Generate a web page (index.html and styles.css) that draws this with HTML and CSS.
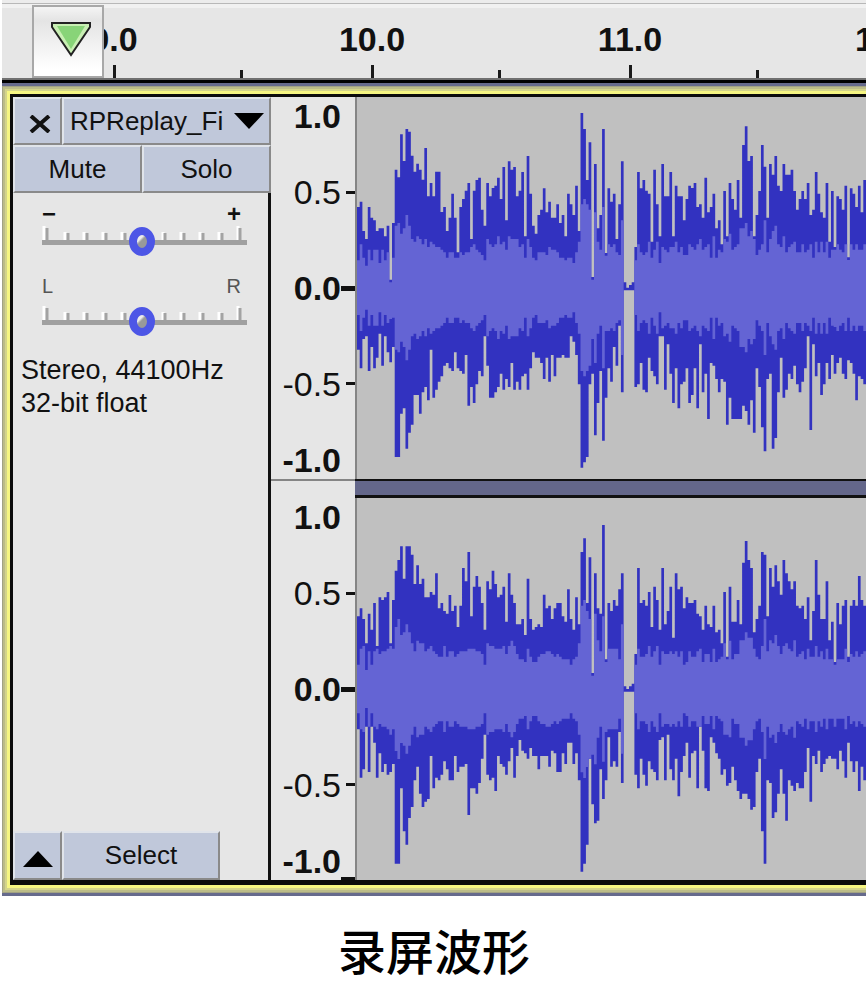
FILE: index.html
```html
<!DOCTYPE html>
<html lang="zh-CN">
<head>
<meta charset="utf-8">
<title>录屏波形</title>
<link rel="stylesheet" href="styles.css">
</head>
<body>
<figure class="figure">
  <div class="editor">
    <div class="ruler">
      <div class="ruler-scale">
        <div class="ruler-cell"><span>9.0</span></div>
        <div class="ruler-cell"><span>10.0</span></div>
        <div class="ruler-cell"><span>11.0</span></div>
        <div class="ruler-cell"><span>12.0</span></div>
      </div>
      <button class="pin" aria-label="Playhead">
        <svg width="42" height="38" viewBox="0 0 42 38"><path d="M2 3H40V7L21 35L2 7Z" fill="#c9efb4" stroke="#222" stroke-width="2"/><path d="M7 6H35L21 29Z" fill="#88d478"/></svg>
      </button>
    </div>
    <div class="track">
      <section class="panel">
        <div class="title-row">
          <button class="cell" aria-label="Close"><svg class="close-icon" width="22" height="18" viewBox="0 0 22 18"><path d="M2 1L20 17M20 1L2 17" stroke="#111" stroke-width="4"/></svg></button>
          <button class="cell title"><span>RPReplay_Fi</span><svg width="30" height="16" viewBox="0 0 30 16"><path d="M0 0H30L15 16Z"/></svg></button>
        </div>
        <div class="mute-row">
          <button class="cell">Mute</button>
          <button class="cell">Solo</button>
        </div>
        <div class="slider gain">
          <div class="ends"><span>−</span><span>+</span></div>
          <div class="rail">
            <svg class="ticks" width="205" height="20" viewBox="0 0 205 20"><use href="#slider-ticks"/></svg>
            <input type="range" min="-36" max="36" value="0" aria-label="Gain">
          </div>
        </div>
        <div class="slider pan">
          <div class="ends"><span>L</span><span>R</span></div>
          <div class="rail">
            <svg class="ticks" width="205" height="20" viewBox="0 0 205 20">
              <g id="slider-ticks">
                <path d="M2 0V14M23 6V14M42 6V14M61 6V14M80 6V14M121 6V14M139 6V14M158 6V14M177 6V14M196 0V14" stroke="#fff" stroke-width="3"/>
                <path d="M5 2V14M26 7V14M45 7V14M64 7V14M83 7V14M123 7V14M142 7V14M161 7V14M180 7V14M198 2V14" stroke="#a3a3a3" stroke-width="3"/>
                <path d="M0 14H205V19H0Z" fill="#a0a0a0"/>
              </g>
            </svg>
            <input type="range" min="-100" max="100" value="0" aria-label="Pan">
          </div>
        </div>
        <p class="info">Stereo, 44100Hz<br>32-bit float</p>
        <div class="foot-row">
          <button class="cell" aria-label="Collapse"><svg class="up-icon" width="30" height="16" viewBox="0 0 30 16"><path d="M0 16H30L15 0Z"/></svg></button>
          <button class="cell">Select</button>
        </div>
      </section>
      <div class="channels">
        <div class="channel">
          <ol class="axis"><li>1.0</li><li class="half">0.5</li><li class="zero">0.0</li><li class="half">-0.5</li><li>-1.0</li></ol>
          <svg class="wave" id="left" viewBox="0 22 189 1146" preserveAspectRatio="none" role="img" aria-label="Left channel"></svg>
        </div>
        <div class="divider"></div>
        <div class="channel">
          <ol class="axis last"><li>1.0</li><li class="half">0.5</li><li class="zero">0.0</li><li class="half">-0.5</li><li>-1.0</li></ol>
          <svg class="wave" id="right" viewBox="0 24 189 1146" preserveAspectRatio="none" role="img" aria-label="Right channel"></svg>
        </div>
      </div>
    </div>
  </div>
  <figcaption>录屏波形</figcaption>
</figure>
<script src="wave.js"></script>
</body>
</html>
```
FILE: styles.css
```css
* { box-sizing: border-box; }
body { margin: 0; background: #fff; color: #111; font-family: "Liberation Sans", Arial, sans-serif; }
.figure { margin: 0; padding: 0 2px; }
.editor { overflow: hidden; }

.ruler {
  position: relative;
  height: 83px;
  overflow: hidden;
  border-bottom: 3px solid #000;
  background: linear-gradient(#ececec 3px, #b8b8b8 3px, #b8b8b8 4px, #f1f1f1 4px, #f1f1f1 8px, #e6e6e6 8px, #e6e6e6 78px, #707070 78px);
}
.ruler-scale { display: flex; margin-left: -17px; height: 78px; }
.ruler-cell {
  flex: none;
  width: 258px;
  padding-top: 19px;
  text-align: center;
  font-size: 34px;
  line-height: 40px;
  font-weight: bold;
  background:
    linear-gradient(#1a1a1a, #1a1a1a) 50% 100% / 3px 13px no-repeat,
    linear-gradient(#1a1a1a, #1a1a1a) 100% 100% / 3px 8px no-repeat;
}
.pin {
  position: absolute;
  left: 30px;
  top: 5px;
  width: 72px;
  height: 73px;
  padding: 0 0 6px 6px;
  border: 2px solid #a8a8a8;
  background: linear-gradient(#f4f4f4, #e4e4e4 20%, #fff 90%);
}
.pin svg { display: block; margin: 0 auto; }

.track {
  display: grid;
  grid-template-columns: 258px 1fr;
  margin-right: -11px;
  padding: 11px 11px 13px 11px;
  border: solid #666a8c;
  border-width: 3px 0;
  box-shadow:
    inset 0 0 0 1px #a2a283,
    inset 0 0 0 3px #bcbc88,
    inset 0 0 0 5px #d4d48a,
    inset 0 0 0 8px #f6f682,
    inset 0 0 0 16px #0c0c0c;
}
.panel { display: flex; flex-direction: column; background: #e6e6e6; border-right: 3px solid #111; }
.title-row, .mute-row { display: grid; margin-right: -3px; height: 48px; }
.title-row { grid-template-columns: 49px 1fr; }
.mute-row { grid-template-columns: 1fr 1fr; }
.cell {
  display: flex;
  align-items: center;
  justify-content: center;
  padding: 0;
  border: 2px solid;
  border-color: #e0e4ea #8a8a8a #8a8a8a #e0e4ea;
  background: #c0c8da;
  color: #111;
  font: 26px "Liberation Sans", Arial, sans-serif;
}
.title { justify-content: space-between; padding: 0 5px 0 6px; }
.close-icon { margin: 6px 0 0 5px; }
.slider { margin: 0 24px 0 29px; }
.ends { display: flex; justify-content: space-between; padding-right: 3px; }
.gain { padding-top: 8px; }
.gain .ends { font-size: 24px; line-height: 26px; font-weight: bold; }
.pan { padding-top: 10px; }
.pan .ends { height: 33px; font-size: 20px; line-height: 24px; color: #555; }
.rail { position: relative; height: 37px; }
.ticks { position: absolute; left: 0; top: -1px; }
.rail input {
  position: absolute;
  left: 0;
  top: -1px;
  width: 200px;
  height: 30px;
  margin: 0;
  appearance: none;
  background: none;
}
.rail input::-webkit-slider-thumb {
  appearance: none;
  width: 26px;
  height: 29px;
  border: 8px solid #4d56e6;
  border-radius: 50%;
  background: linear-gradient(135deg, #eee 30%, #999 45%);
}
.info { margin: 10px 0 0; padding-left: 8px; font-size: 27px; line-height: 33px; white-space: nowrap; }
.foot-row { display: grid; grid-template-columns: 49px 158px; height: 49px; margin-top: auto; }
.up-icon { margin-top: 6px; }

.channels { min-width: 0; background: #e6e6e6; }
.channel { display: grid; grid-template-columns: 86px 1fr; height: 382px; }
.axis {
  display: grid;
  grid-template-rows: 37fr 116fr 76fr 115fr 38fr;
  margin: 0;
  padding: 0;
  list-style: none;
  border-right: 2px solid #858585;
  font-size: 34px;
  line-height: 34px;
  font-weight: bold;
}
.axis li { display: flex; align-items: center; justify-content: flex-end; padding-right: 14px; }
.axis li::after { content: ""; background: #111; }
.axis .half { font-weight: normal; padding-right: 0; }
.axis .half::after { width: 9px; height: 3px; margin-left: 5px; }
.axis .zero { padding-right: 0; }
.axis .zero::after { width: 14px; height: 5px; }
.axis.last { background: linear-gradient(#111, #111) 100% 100% / 14px 3px no-repeat; }
.divider {
  height: 19px;
  margin-left: 84px;
  border: solid #111;
  border-width: 2px 0 3px;
  background: #64678a;
  box-shadow: -84px 0 0 #858585;
}
.divider::before {
  content: "";
  display: block;
  width: 84px;
  height: 17px;
  margin-left: -84px;
  background: #e6e6e6;
}
.wave { display: block; width: 100%; height: 382px; background: #c0c0c0; }
.peak { fill: #3232c0; }
.rms { fill: #6464d4; }

figcaption {
  padding-top: 13px;
  text-align: center;
  font: 500 48px/80px "Noto Sans CJK SC", sans-serif;
  color: #000;
}
```
FILE: wave.js
```js
// Each list holds one vertical position per sample column: the upper peak,
// the lower peak and the upper RMS edge (the lower one mirrors it).
const channels = {
  left: {
    mirror: 1188,
    top: [352,336,424,448,352,384,392,424,416,416,440,408,570,400,240,263,134,214,118,126,198,246,222,240,270,175,320,280,320,246,246,367,352,424,384,312,384,488,352,328,303,280,448,303,271,264,360,408,280,320,295,288,264,328,232,392,215,240,232,320,303,247,440,199,312,408,432,376,360,296,368,336,384,384,344,400,376,440,312,344,376,288,424,70,118,271,158,562,223,416,376,118,490,296,336,312,448,344,215,578,594,586,578,472,247,296,271,303,312,456,240,344,440,223,320,320,247,440,288,320,320,392,328,288,295,280,352,344,384,264,368,352,312,416,392,464,304,440,280,328,360,271,384,166,110,214,199,440,376,304,166,231,384,223,255,199,288,304,223,255,255,240,304,360,328,304,328,280,376,360,247,312,368,384,280,456,304,472,320,328,360,288,503,296,312,352,288,368,271],
    bottom: [780,836,748,740,844,772,836,804,732,828,740,788,818,772,1102,1102,972,956,1077,1029,1005,916,916,972,908,892,932,780,924,900,876,860,828,820,836,844,788,836,844,852,796,948,892,940,884,844,860,740,828,924,924,908,892,852,900,868,892,820,900,876,900,860,852,900,836,788,804,804,820,868,804,876,796,860,804,804,796,804,804,740,756,796,884,1134,1118,1102,884,852,1037,940,844,1053,924,836,876,772,828,708,908,602,602,602,602,892,884,820,900,908,804,844,860,884,740,740,900,764,852,940,836,956,884,876,836,940,916,836,956,764,908,852,988,820,828,868,908,868,876,1005,924,988,988,988,988,948,964,1005,932,1029,836,892,1013,1085,868,852,1077,1045,908,804,924,900,852,868,828,884,908,876,836,740,1021,764,860,820,916,884,820,868,796,852,820,804,852,868,812,820,852,932,860,868,884],
    rms: [512,464,504,528,480,512,480,480,520,480,512,488,500,504,408,400,432,416,376,408,448,456,440,448,464,448,472,456,464,472,472,480,488,504,488,488,504,504,488,496,488,488,472,464,480,488,496,512,448,464,472,464,440,464,456,480,440,448,448,448,472,464,504,448,472,504,512,488,488,488,496,472,480,480,488,504,504,512,504,504,520,488,456,344,328,344,360,440,368,456,480,352,464,464,472,464,488,496,392,602,602,602,602,512,464,488,496,488,456,504,480,456,520,472,480,488,472,472,456,488,472,496,496,464,472,480,464,448,480,472,464,504,440,504,480,488,448,456,432,480,472,464,416,416,400,440,424,440,496,480,464,392,488,448,424,408,464,472,440,488,472,464,456,488,488,464,488,480,464,504,456,488,456,488,456,504,480,476,464,480,488,464,504,464,480,464,480,480,464]
  },
  right: {
    mirror: 1194,
    top: [379,355,387,460,371,419,339,468,322,330,322,306,460,330,242,210,169,266,169,169,194,282,226,282,266,322,322,306,314,250,355,339,363,371,315,363,347,411,347,234,274,186,379,290,258,290,339,419,274,298,242,282,322,314,290,395,250,314,339,403,403,387,435,266,387,419,411,403,411,314,355,347,387,355,339,339,379,395,298,387,419,322,403,186,145,339,202,549,250,355,371,105,508,339,363,330,347,298,250,589,597,589,581,492,234,339,330,347,306,411,290,330,419,234,403,363,290,443,250,298,290,355,322,339,339,330,371,379,419,347,403,411,347,427,419,460,306,500,290,395,395,330,403,218,153,210,234,427,387,347,186,194,379,234,290,226,274,314,210,250,274,298,274,347,355,347,387,322,451,363,210,314,387,387,274,451,395,516,339,403,347,330,500,347,330,347,258,330,347],
    bottom: [718,863,838,710,846,710,758,863,790,846,822,854,846,822,1121,1121,895,1024,1064,984,951,871,830,911,951,935,927,798,895,863,871,854,814,838,871,871,798,846,830,830,822,975,895,895,911,879,806,734,854,871,863,903,798,822,830,854,814,774,863,798,750,782,790,806,774,798,798,838,798,798,798,830,782,790,846,846,790,822,758,758,822,790,871,1145,1121,1064,806,943,1000,992,838,927,871,742,830,814,830,726,879,605,605,605,605,854,895,806,854,887,814,838,846,871,750,742,871,734,838,871,806,919,846,798,758,863,790,782,895,710,782,895,903,742,758,790,806,854,838,887,879,830,871,903,927,911,911,927,959,951,846,806,1024,1121,871,879,984,967,911,838,911,992,871,887,903,879,895,895,846,774,935,798,822,782,846,822,806,798,806,806,838,782,814,863,758,814,846,814,903,830,871],
    rms: [524,476,468,540,484,524,484,476,492,484,484,476,460,476,411,387,435,427,403,427,460,484,452,460,460,484,476,468,484,492,500,500,468,500,484,484,500,492,484,484,484,476,476,476,484,484,492,524,460,468,468,476,476,476,468,492,468,452,468,492,508,508,516,476,500,516,516,500,492,492,484,484,492,500,492,500,508,508,508,524,508,500,460,347,330,363,387,400,371,451,484,379,468,476,476,476,476,508,403,605,605,605,605,524,476,500,500,492,468,500,484,468,524,484,492,492,484,492,484,500,484,524,516,484,500,500,484,476,516,492,492,516,476,516,508,500,460,460,452,508,492,492,451,451,427,443,443,476,500,508,468,387,484,451,460,435,468,492,468,460,476,484,451,500,492,484,508,476,500,500,468,500,484,508,476,508,508,484,508,508,508,476,516,492,500,484,500,492,484]
  }
};

function outline(tops, bottoms) {
  const upper = tops.map((y, i) => `${i} ${y} ${i + 1} ${y}`);
  const lower = bottoms.map((y, i) => `${i + 1} ${y} ${i} ${y}`).reverse();
  return `M${upper.join(" ")} ${lower.join(" ")}Z`;
}

function addPath(svg, name, d) {
  const path = document.createElementNS("http://www.w3.org/2000/svg", "path");
  path.setAttribute("class", name);
  path.setAttribute("d", d);
  svg.append(path);
}

for (const [id, data] of Object.entries(channels)) {
  const svg = document.getElementById(id);
  const silent = i => data.rms[i] > 590;
  const rmsTop = data.rms.map((y, i) => silent(i) ? data.bottom[i] : Math.max(y, data.top[i] + 8));
  const rmsBottom = data.rms.map((y, i) => silent(i) ? data.bottom[i] : Math.min(data.mirror - y, data.bottom[i]));
  addPath(svg, "peak", outline(data.top, data.bottom));
  addPath(svg, "rms", outline(rmsTop, rmsBottom));
}
```
